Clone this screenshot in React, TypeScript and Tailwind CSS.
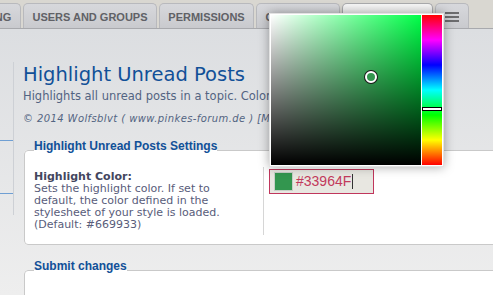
const tabs = [
  { label: 'POSTING', w: 'w-[69px]' },
  { label: 'USERS AND GROUPS', w: 'w-[134px]' },
  { label: 'PERMISSIONS', w: 'w-[95px]' },
  { label: 'CUSTOMISE', w: 'w-[84px]' },
  { label: 'EXTENSIONS', w: 'w-[91px]', active: true },
];

function ColorPicker() {
  return (
    <div className="absolute left-[269px] top-[13px] z-10 flex gap-[1px] border border-[#e2e2e2] bg-white p-[1px] shadow-[0_0_10px_rgba(0,0,0,0.35)]">
      <div className="relative h-[150px] w-[150px] bg-[#00ff48]">
        <div className="absolute inset-0 bg-gradient-to-r from-white to-transparent" />
        <div className="absolute inset-0 bg-gradient-to-b from-transparent to-black" />
        <div className="absolute left-[94px] top-[56px] h-[12px] w-[12px] rounded-full border-2 border-white bg-[#33964f] shadow-[0_0_0_1px_#1a1a1a]" />
      </div>
      <div className="relative h-[150px] w-[20px] bg-[linear-gradient(to_bottom,#ff0000_0%,#ff00ff_16.67%,#0000ff_33.33%,#00ffff_50%,#00ff00_66.67%,#ffff00_83.33%,#ff0000_100%)]">
        <div className="absolute left-0 top-[92px] h-[4px] w-full border border-black bg-white" />
      </div>
    </div>
  );
}

export default function App() {
  return (
    <div className="relative h-[295px] w-[493px] overflow-hidden bg-[#dcdee1] font-['DejaVu_Sans',sans-serif]">
      {/* tab bar */}
      <div className="flex h-[29px] items-end border-b border-[#a8a9ad] bg-[#d9d7d1]">
        <div className="ml-[-48px] flex items-end gap-[2px]">
          {tabs.map((t) => (
            <div
              key={t.label}
              className={
                (t.active
                  ? "border-[#a9aaad] from-[#f6f6f6] to-[#e3e3e3] "
                  : "border-[#b8b9bd] from-[#d7d8dc] to-[#c9cace] ") +
                t.w +
                " flex h-[25px] shrink-0 items-center justify-center whitespace-nowrap rounded-t-[5px] border border-b-0 bg-gradient-to-b pt-[2px] font-['Liberation_Sans',sans-serif] text-[11px] font-bold text-[#606166]"
              }
            >
              {t.label}
            </div>
          ))}
          <div className="flex h-[25px] w-[34px] shrink-0 flex-col items-center justify-center gap-[2px] rounded-t-[5px] border border-b-0 border-[#b8b9bd] bg-gradient-to-b from-[#d7d8dc] to-[#c9cace] pt-[1px]">
            <span className="h-[2px] w-[14px] bg-[#6c6c6e]" />
            <span className="h-[2px] w-[14px] bg-[#6c6c6e]" />
            <span className="h-[2px] w-[14px] bg-[#6c6c6e]" />
          </div>
        </div>
      </div>

      <div className="flex h-[266px] bg-gradient-to-b from-[#dcdee1] to-[#eeeeee]">
        {/* side menu */}
        <div className="mt-[33px] h-[153px] w-[14px] shrink-0 border-r border-[#cdd0d5]">
          <div className="h-[79px] border-b border-[#6f9fd3]" />
          <div className="h-[53px] border-b border-[#6f9fd3]" />
        </div>

        <div className="ml-[9px] w-[490px] shrink-0">
          <h1 className="mt-[38px] text-[19.5px] leading-[16px] text-[#115098]">Highlight Unread Posts</h1>
          <p className="mt-[7px] whitespace-nowrap text-[11.5px] leading-[12px] text-[#536482]">
            Highlights all unread posts in a topic. Color can be chosen.
          </p>
          <p className="mt-[11px] whitespace-nowrap text-[10px] italic leading-[12px] tracking-[0.4px] text-[#536482]">
            © 2014 Wolfsblvt ( www.pinkes-forum.de ) [Mod]
          </p>

          <fieldset className="ml-[1px] mt-[14px] rounded-[4px] border border-[#c9c9c9] bg-white pb-[9px] pl-[9px] pt-[6px]">
            <legend className="pb-[7px] font-['Liberation_Sans',sans-serif] text-[12px] font-bold leading-[15px] text-[#115098]">
              Highlight Unread Posts Settings
            </legend>
            <div className="flex">
              <div className="w-[229px] shrink-0 pb-[4px] pr-[10px] pt-[4px] text-[11px] leading-[12px]">
                <div className="font-bold text-[#43465e]">Highlight Color:</div>
                <div className="text-[#585c7a]">
                  Sets the highlight color. If set to default, the color defined in the stylesheet of your style is
                  loaded. (Default: #669933)
                </div>
              </div>
              <div className="border-l border-[#d6d6d6] pl-[5px] pt-[2px]">
                <div className="flex h-[25px] w-[105px] items-center border border-[#c0365c] bg-[#e8e7e1] pl-[4px]">
                  <span className="h-[19px] w-[19px] border border-[#c7d0c7] bg-[#33964f]" />
                  <span className="ml-[3px] font-['Liberation_Sans',sans-serif] text-[14px] text-[#c23a5c]">#33964F</span>
                  <span className="ml-[1px] h-[15px] w-[1px] bg-[#333]" />
                </div>
              </div>
            </div>
          </fieldset>

          <fieldset className="ml-[1px] mt-[14px] h-[60px] rounded-[4px] border border-[#c9c9c9] bg-white pl-[9px]">
            <legend className="pb-[7px] font-['Liberation_Sans',sans-serif] text-[12px] font-bold leading-[15px] text-[#115098]">
              Submit changes
            </legend>
          </fieldset>
        </div>
      </div>

      <ColorPicker />
    </div>
  );
}
